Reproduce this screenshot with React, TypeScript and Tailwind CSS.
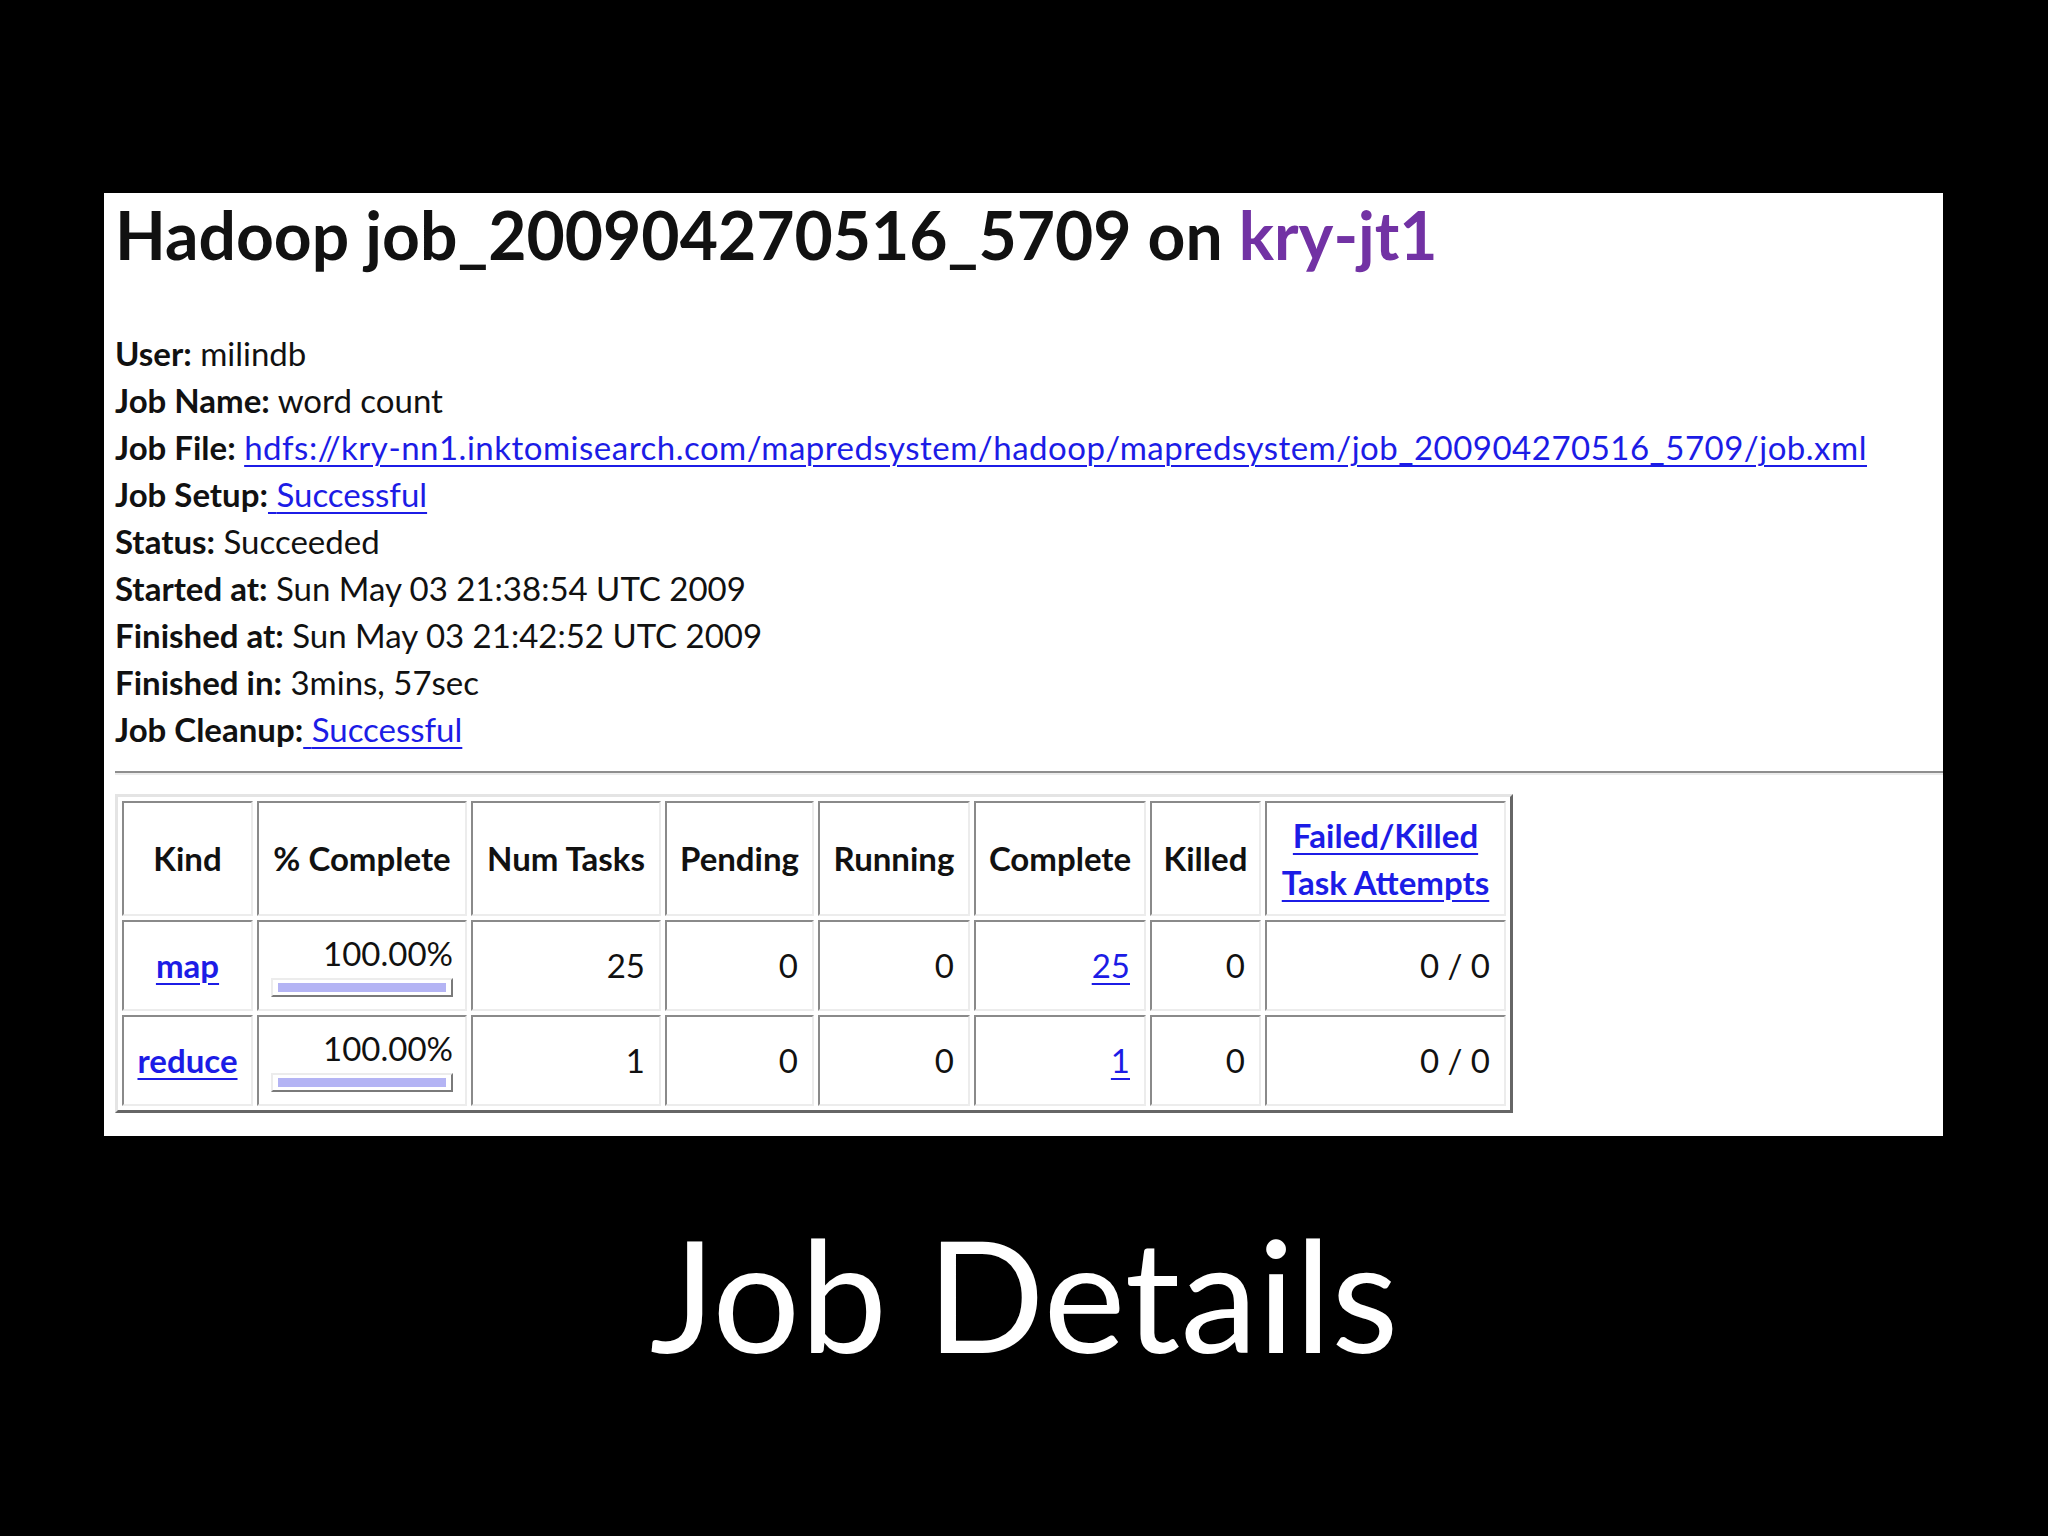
import React from 'react';

const body = { fontFamily: 'Lato, "Noto Sans", sans-serif' };

const info: { label: string; value: string; link?: boolean; lead?: boolean }[] = [
    { label: 'User:', value: 'milindb' },
    { label: 'Job Name:', value: 'word count' },
    { label: 'Job File:', value: 'hdfs://kry-nn1.inktomisearch.com/mapredsystem/hadoop/mapredsystem/job_200904270516_5709/job.xml', link: true },
    { label: 'Job Setup:', value: 'Successful', link: true, lead: true },
    { label: 'Status:', value: 'Succeeded' },
    { label: 'Started at:', value: 'Sun May 03 21:38:54 UTC 2009' },
    { label: 'Finished at:', value: 'Sun May 03 21:42:52 UTC 2009' },
    { label: 'Finished in:', value: '3mins, 57sec' },
    { label: 'Job Cleanup:', value: 'Successful', link: true, lead: true },
];

const cell = 'border-2 border-t-[#8a8a8a] border-l-[#8a8a8a] border-b-[#ececec] border-r-[#ececec]';
const link = 'text-[#1c1ce6] underline decoration-2 underline-offset-[5px]';

const rows = [
    { kind: 'map', num: '25', complete: '25' },
    { kind: 'reduce', num: '1', complete: '1' },
];

const ProgressBar: React.FC = () => (
    <div className="ml-auto mt-[7px] h-[19px] w-[182px] border-2 border-t-[#ececec] border-l-[#ececec] border-b-[#7a7a7a] border-r-[#7a7a7a] bg-white px-[5px] py-[3px]">
        <div className="h-full w-full bg-[#b4b4f4]" />
    </div>
);

export default function App() {
    return (
        <div className="flex h-[1536px] w-[2048px] flex-col bg-black" style={body}>
            <div className="ml-[104px] mt-[193px] h-[943px] w-[1839px] bg-white pl-[11px]">
                <h1 className="pt-[2px] text-[66px] font-bold leading-[80px] text-[#111]">
                    Hadoop job_200904270516_5709 on <span className="text-[#7232a4]">kry-jt1</span>
                </h1>
                <div className="mt-[55px] text-[33px] leading-[47px] text-[#111]">
                    {info.map(item => (
                        <div key={item.label} className="whitespace-nowrap">
                            <span className="font-bold">{item.label}</span>
                            {item.link ? (
                                item.lead ? (
                                    <a className={link}>{'\u00a0'}{item.value}</a>
                                ) : (
                                    <>
                                        {' '}
                                        <a className={`${link} tracking-[0.5px]`}>{item.value}</a>
                                    </>
                                )
                            ) : (
                                <span> {item.value}</span>
                            )}
                        </div>
                    ))}
                </div>
                <div className="mt-[18px] h-[4px] border-t-2 border-b-2 border-t-[#8e8e8e] border-b-[#ececec]" />
                <table className="mt-[19px] border-separate border-[3px] border-t-[#e4e4e4] border-l-[#e4e4e4] border-b-[#666] border-r-[#666] text-[33px] text-[#111] [border-spacing:4px]">
                    <thead>
                        <tr className="h-[115px]">
                            <th className={`${cell} w-[131px] font-bold`}>Kind</th>
                            <th className={`${cell} w-[209px] font-bold`}>% Complete</th>
                            <th className={`${cell} w-[190px] font-bold`}>Num Tasks</th>
                            <th className={`${cell} w-[149px] font-bold`}>Pending</th>
                            <th className={`${cell} w-[152px] font-bold`}>Running</th>
                            <th className={`${cell} w-[172px] font-bold`}>Complete</th>
                            <th className={`${cell} w-[111px] font-bold`}>Killed</th>
                            <th className={`${cell} w-[241px] font-bold leading-[47px]`}>
                                <a className={link}>Failed/Killed<br />Task Attempts</a>
                            </th>
                        </tr>
                    </thead>
                    <tbody>
                        {rows.map(row => (
                            <tr key={row.kind} className="h-[91px]">
                                <td className={`${cell} text-center font-bold`}>
                                    <a className={link}>{row.kind}</a>
                                </td>
                                <td className={`${cell} px-[12px]`}>
                                    <div className="text-right leading-[36px]">100.00%</div>
                                    <ProgressBar />
                                </td>
                                <td className={`${cell} pr-[14px] text-right`}>{row.num}</td>
                                <td className={`${cell} pr-[14px] text-right`}>0</td>
                                <td className={`${cell} pr-[14px] text-right`}>0</td>
                                <td className={`${cell} pr-[14px] text-right`}>
                                    <a className={link}>{row.complete}</a>
                                </td>
                                <td className={`${cell} pr-[14px] text-right`}>0</td>
                                <td className={`${cell} pr-[14px] text-right`}>0 / 0</td>
                            </tr>
                        ))}
                    </tbody>
                </table>
            </div>
            <div className="mt-[62px] text-center text-[155px] leading-[190px] text-white" style={{ fontFamily: 'Lato, sans-serif' }}>
                Job Details
            </div>
        </div>
    );
}
